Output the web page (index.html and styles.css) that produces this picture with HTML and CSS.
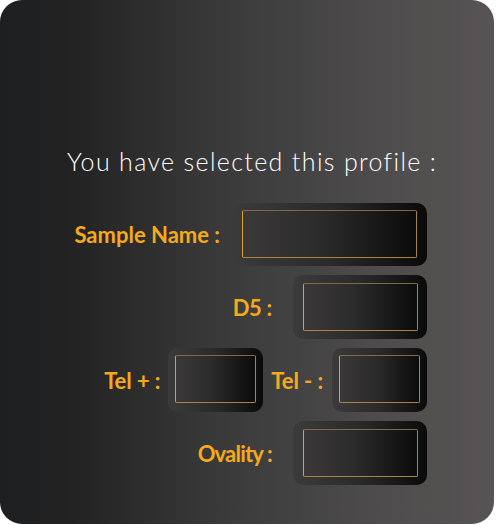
FILE: index.html
```html
<!DOCTYPE html>
<html>
<head>
<meta charset="utf-8">
<link rel="stylesheet" href="styles.css">
</head>
<body>
<div class="card">
  <h1 class="title">You have selected this profile :</h1>
  <div class="rows">
    <div class="row row-name">
      <span class="label">Sample Name :</span>
      <div class="field field-wide"><div class="inner"></div></div>
    </div>
    <div class="row row-d5">
      <span class="label">D5 :</span>
      <div class="field"><div class="inner"></div></div>
    </div>
    <div class="row row-tel">
      <span class="label">Tel + :</span>
      <div class="field field-small"><div class="inner"></div></div>
      <span class="label label-telm">Tel - :</span>
      <div class="field field-small"><div class="inner"></div></div>
    </div>
    <div class="row row-ov">
      <span class="label">Ovality :</span>
      <div class="field"><div class="inner"></div></div>
    </div>
  </div>
</div>
</body>
</html>
```
FILE: styles.css
```css
html, body {
  margin: 0;
  padding: 0;
  background: #ffffff;
}
.card {
  width: 494px;
  height: 524px;
  border-radius: 22px;
  background: linear-gradient(90deg, #1e1f21 0%, #222222 14%, #3a3a3a 45%, #4d4b4b 75%, #585455 100%);
  box-sizing: border-box;
  padding-top: 145px;
  display: flex;
  flex-direction: column;
}
.title {
  margin: 0 0 0 67px;
  font-family: Lato, "Open Sans", sans-serif;
  font-weight: 300;
  font-size: 25px;
  line-height: 32px;
  letter-spacing: 1.35px;
  color: #ffffff;
  white-space: nowrap;
}
.rows {
  margin-top: 26px;
  display: flex;
  flex-direction: column;
  gap: 9px;
  padding-right: 67px;
}
.row {
  display: flex;
  justify-content: flex-end;
  align-items: center;
}
.label {
  font-family: Lato, "Open Sans", sans-serif;
  font-weight: 700;
  font-size: 22px;
  color: #f7a91c;
  letter-spacing: -0.3px;
  margin-right: 21px;
  white-space: nowrap;
}
.row-name .label { margin-right: 12px; letter-spacing: 0; }
.row-tel .label { margin-right: 8px; letter-spacing: -0.1px; }
.row-ov .label { letter-spacing: -0.8px; }
.row-tel .label-telm { margin-left: 8px; margin-right: 9px; }
.field {
  width: 134px;
  height: 64px;
  box-sizing: border-box;
  padding: 8px 9px 8px 10px;
  border-radius: 10px;
  background: linear-gradient(90deg, #3c3b3b 0%, #2a2a2a 50%, #0a0a0a 100%);
}
.field-wide {
  width: 195px;
  height: 63px;
  padding: 7px 10px 8px 10px;
}
.field-small {
  width: 95px;
  padding: 7px 7px 9px 7px;
}
.inner {
  width: 100%;
  height: 100%;
  box-sizing: border-box;
  border: 1px solid #a8843c;
  border-top-color: #7e6a44;
  border-left-color: #d9a62a;
  border-radius: 2px;
  background: linear-gradient(90deg, #3a3838 0%, #2c2b2b 45%, #0b0b0b 100%);
}
```
